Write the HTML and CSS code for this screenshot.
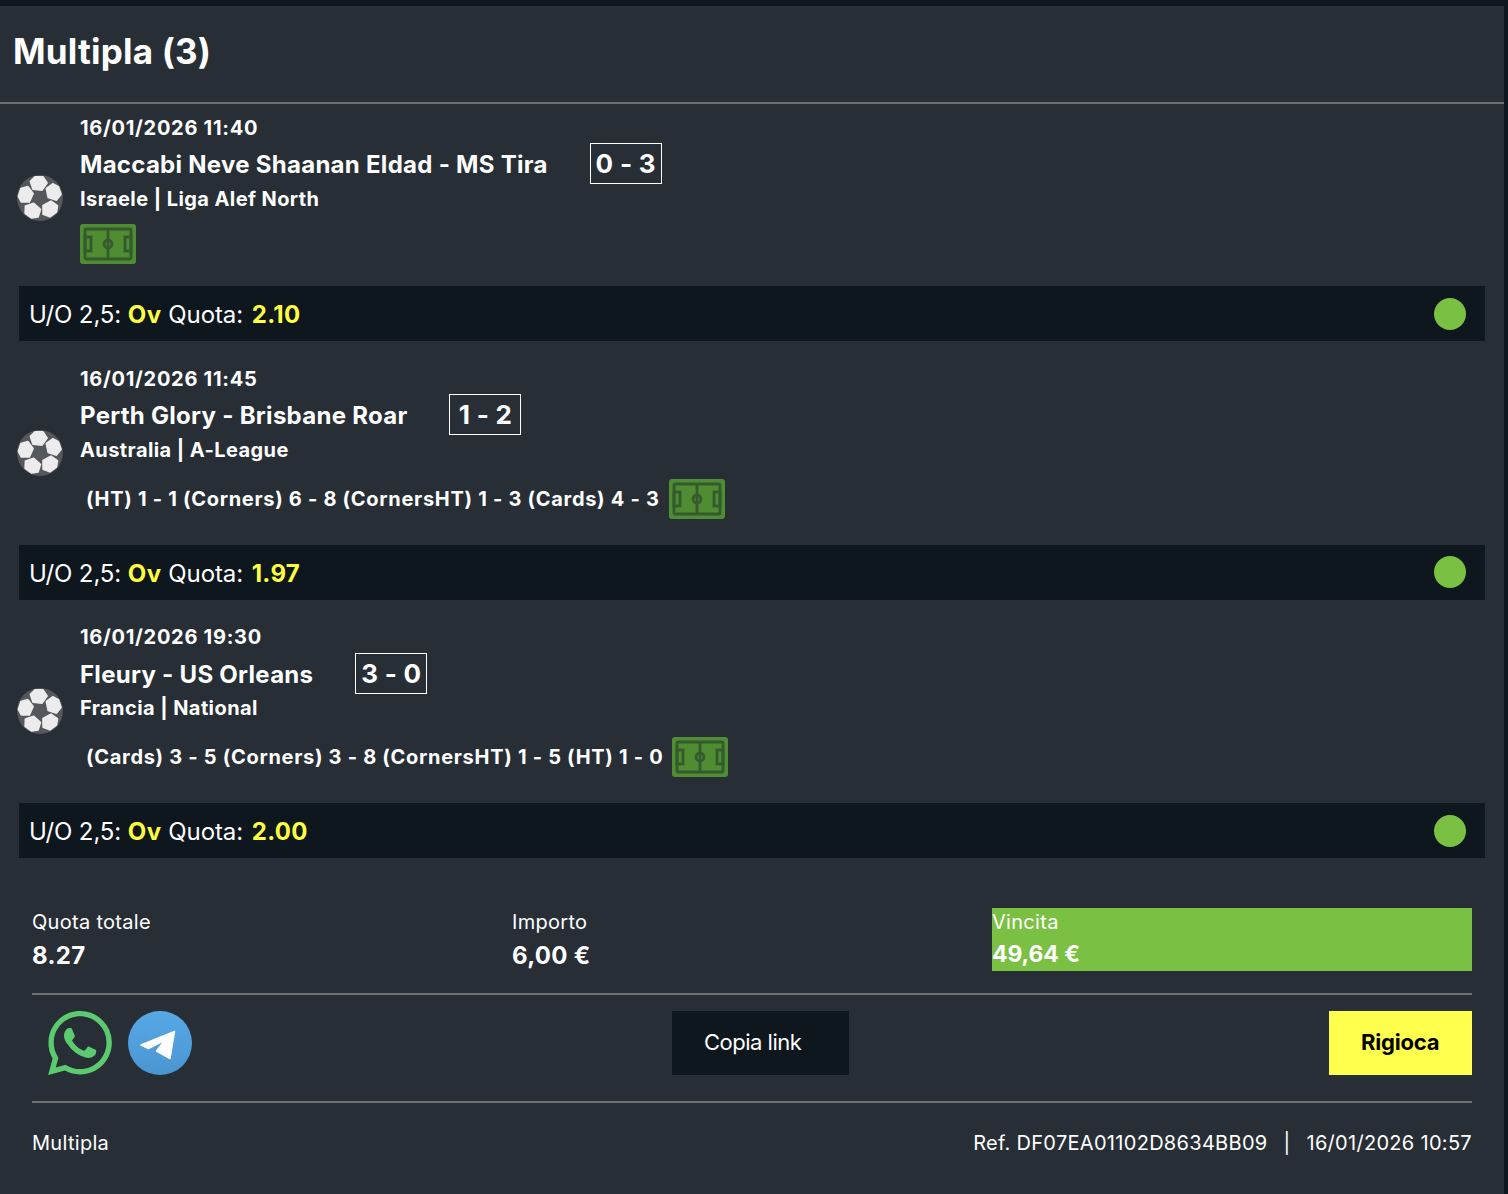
FILE: index.html
```html
<!DOCTYPE html>
<html lang="it">
<head>
<meta charset="utf-8">
<title>Multipla (3)</title>
<link rel="stylesheet" href="styles.css">
</head>
<body>
<svg class="defs" width="0" height="0" aria-hidden="true">
  <defs>
    <symbol id="ball" viewBox="0 0 46 46">
      <circle cx="23" cy="23" r="23" fill="#54575c"/>
      <g fill="#ececec" stroke="#ececec" stroke-width="1.8" stroke-linejoin="round">
        <polygon points="13.5,6.5 18,2 26,2 30,8 25,15 16,14"/>
        <polygon points="13.5,6.5 18,2 26,2 30,8 25,15 16,14" transform="rotate(72 23 23)"/>
        <polygon points="13.5,6.5 18,2 26,2 30,8 25,15 16,14" transform="rotate(144 23 23)"/>
        <polygon points="13.5,6.5 18,2 26,2 30,8 25,15 16,14" transform="rotate(216 23 23)"/>
        <polygon points="13.5,6.5 18,2 26,2 30,8 25,15 16,14" transform="rotate(288 23 23)"/>
      </g>
    </symbol>
    <symbol id="field" viewBox="0 0 56 40">
      <rect width="56" height="40" rx="3" fill="#4f8c32"/>
      <g fill="none" stroke="#355a2e" stroke-width="2.8">
        <rect x="5" y="5" width="46" height="30" rx="1"/>
        <line x1="28" y1="5" x2="28" y2="35"/>
        <circle cx="28" cy="20" r="4"/>
        <rect x="5" y="13" width="6" height="14"/>
        <rect x="45" y="13" width="6" height="14"/>
      </g>
    </symbol>
    <linearGradient id="tg-fill" x1="0" y1="0" x2="0" y2="1">
      <stop offset="0" stop-color="#57a8e6"/>
      <stop offset="1" stop-color="#4a96d2"/>
    </linearGradient>
  </defs>
</svg>
<main class="panel">
  <h1 class="title">Multipla (3)</h1>

  <section class="match match-first">
    <svg class="ball"><use href="#ball"/></svg>
    <div class="info">
      <div class="date">16/01/2026 11:40</div>
      <div class="teams"><span class="name">Maccabi Neve Shaanan Eldad - MS Tira</span><span class="score">0 - 3</span></div>
      <div class="league">Israele | Liga Alef North</div>
      <div class="extra"><svg class="field"><use href="#field"/></svg></div>
    </div>
  </section>
  <div class="bet"><span class="pick">U/O 2,5: <b>Ov</b> Quota: <b class="odds">2.10</b></span><i class="dot"></i></div>

  <section class="match">
    <svg class="ball"><use href="#ball"/></svg>
    <div class="info">
      <div class="date">16/01/2026 11:45</div>
      <div class="teams"><span class="name">Perth Glory - Brisbane Roar</span><span class="score">1 - 2</span></div>
      <div class="league">Australia | A-League</div>
      <div class="extra"><span class="stats">(HT) 1 - 1 (Corners) 6 - 8 (CornersHT) 1 - 3 (Cards) 4 - 3</span><svg class="field"><use href="#field"/></svg></div>
    </div>
  </section>
  <div class="bet"><span class="pick">U/O 2,5: <b>Ov</b> Quota: <b class="odds">1.97</b></span><i class="dot"></i></div>

  <section class="match">
    <svg class="ball"><use href="#ball"/></svg>
    <div class="info">
      <div class="date">16/01/2026 19:30</div>
      <div class="teams"><span class="name">Fleury - US Orleans</span><span class="score">3 - 0</span></div>
      <div class="league">Francia | National</div>
      <div class="extra"><span class="stats">(Cards) 3 - 5 (Corners) 3 - 8 (CornersHT) 1 - 5 (HT) 1 - 0</span><svg class="field"><use href="#field"/></svg></div>
    </div>
  </section>
  <div class="bet"><span class="pick">U/O 2,5: <b>Ov</b> Quota: <b class="odds">2.00</b></span><i class="dot"></i></div>

  <div class="summary">
    <div class="totals">
      <div class="cell"><div class="label">Quota totale</div><div class="value">8.27</div></div>
      <div class="cell"><div class="label">Importo</div><div class="value">6,00 €</div></div>
      <div class="cell win"><div class="label">Vincita</div><div class="value">49,64 €</div></div>
    </div>
    <div class="actions">
      <div class="share">
        <svg class="wa" viewBox="0 0 24 24"><path d="M17.472 14.382c-.297-.149-1.758-.867-2.03-.967-.273-.099-.471-.148-.67.15-.197.297-.767.966-.94 1.164-.173.199-.347.223-.644.075-.297-.15-1.255-.463-2.39-1.475-.883-.788-1.48-1.761-1.653-2.059-.173-.297-.018-.458.13-.606.134-.133.298-.347.446-.52.149-.174.198-.298.298-.497.099-.198.05-.371-.025-.52-.075-.149-.669-1.612-.916-2.207-.242-.579-.487-.5-.669-.51-.173-.008-.371-.01-.57-.01-.198 0-.52.074-.792.372-.272.297-1.04 1.016-1.04 2.479 0 1.462 1.065 2.875 1.213 3.074.149.198 2.096 3.2 5.077 4.487.709.306 1.262.489 1.694.625.712.227 1.36.195 1.871.118.571-.085 1.758-.719 2.006-1.413.248-.694.248-1.289.173-1.413-.074-.124-.272-.198-.57-.347m-5.421 7.403h-.004a9.87 9.87 0 01-5.031-1.378l-.361-.214-3.741.982.998-3.648-.235-.374a9.86 9.86 0 01-1.51-5.26c.001-5.45 4.436-9.884 9.888-9.884 2.64 0 5.122 1.03 6.988 2.898a9.825 9.825 0 012.893 6.994c-.003 5.45-4.437 9.884-9.885 9.884m8.413-18.297A11.815 11.815 0 0012.05 0C5.495 0 .16 5.335.157 11.892c0 2.096.547 4.142 1.588 5.945L.057 24l6.305-1.654a11.882 11.882 0 005.683 1.448h.005c6.554 0 11.89-5.335 11.893-11.893a11.821 11.821 0 00-3.48-8.413z"/></svg>
        <svg class="tg" viewBox="0 0 64 64">
          <circle cx="32" cy="32" r="32" fill="url(#tg-fill)"/>
          <polygon fill="#fff" stroke="#fff" stroke-width="1.5" stroke-linejoin="round" points="13,34 46.500,20.500 42,47.500 28.500,40 37,29 20.500,37.500"/>
        </svg>
      </div>
      <a class="btn btn-copy">Copia link</a>
      <a class="btn btn-replay">Rigioca</a>
    </div>
    <div class="meta">
      <span>Multipla</span>
      <span>Ref. DF07EA01102D8634BB09<span class="sep">|</span>16/01/2026 10:57</span>
    </div>
  </div>
</main>
</body>
</html>
```
FILE: styles.css
```css
* { box-sizing: border-box; }
html, body { margin: 0; padding: 0; }
body {
  background: #0e161e;
  color: #fff;
  font-family: Inter, "Liberation Sans", sans-serif;
  padding-top: 6px;
  width: 1508px;
  height: 1194px;
  overflow: hidden;
}
.defs { position: absolute; }
.panel {
  width: 1504px;
  height: 1188px;
  background: #272e36;
}
.title {
  margin: 0;
  height: 98px;
  border-bottom: 2px solid #6d7070;
  padding-left: 13px;
  font-size: 35px;
  line-height: 90px;
  font-weight: 700;
  letter-spacing: .2px;
}
.match {
  display: flex;
  align-items: center;
  height: 203.5px;
  padding-left: 17px;
}
.match-first {
  height: 182px;
  padding-bottom: 11px;
}
.ball {
  width: 46px;
  height: 46px;
  flex: none;
  margin-right: 17px;
  margin-top: 20px;
}
.match-first .ball { margin-top: 17px; }
.info { flex: 1; min-width: 0; }
.date { font-size: 20px; line-height: 24px; font-weight: 700; margin-bottom: 4px; letter-spacing: .72px; }
.match-first .date { line-height: 26px; margin-bottom: 2px; }
.teams { display: flex; align-items: center; height: 42px; }
.name { font-size: 24px; font-weight: 700; letter-spacing: .28px; }
.score {
  margin-left: 42px;
  margin-top: -2px;
  border: 1px solid #fff;
  width: 72px;
  height: 41px;
  line-height: 39px;
  text-align: center;
  font-size: 26px;
  font-weight: 700;
  letter-spacing: .3px;
}
.league { font-size: 20px; line-height: 24px; font-weight: 700; margin-top: 1px; margin-bottom: 17px; letter-spacing: .42px; }
.match-first .league { margin-top: 2px; margin-bottom: 13px; }
.extra { display: flex; align-items: center; height: 40px; }
.stats { font-size: 20px; font-weight: 700; margin-left: 6px; margin-right: 9px; letter-spacing: .7px; }
.field { width: 56px; height: 40px; flex: none; filter: blur(.4px); }
.bet {
  margin: 0 19px;
  height: 55px;
  width: 1466px;
  background: #0e161e;
  display: flex;
  align-items: center;
  justify-content: space-between;
  padding: 0 19px 0 10px;
  font-size: 24px;
}
.pick { padding-top: 2px; letter-spacing: -.1px; }
.bet b { color: #ffff3f; font-weight: 700; letter-spacing: .5px; }
.bet .odds { margin-left: 2px; letter-spacing: .3px; }
.dot { width: 32px; height: 32px; border-radius: 50%; background: #7ac143; }
.summary { padding: 50px 32px 0; }
.totals { display: flex; height: 63px; }
.cell { width: 480px; }
.label { font-size: 20px; line-height: 28px; letter-spacing: .3px; }
.value { font-size: 24px; font-weight: 700; line-height: 31px; margin-top: 4px; letter-spacing: .3px; }
.win { background: #7ac143; }
.win .value { font-size: 23px; margin-top: 3px; letter-spacing: -.1px; }
.actions {
  margin-top: 22px;
  border-top: 2px solid #6d7070;
  border-bottom: 2px solid #6d7070;
  padding: 16px 0 26px;
  display: flex;
  justify-content: space-between;
  height: 110px;
}
.share { display: flex; gap: 16px; padding-left: 16px; }
.wa { width: 64px; height: 64px; fill: #5ccb70; }
.tg { width: 64px; height: 64px; }
.btn {
  height: 64px;
  display: flex;
  align-items: center;
  padding-bottom: 2px;
  font-size: 22px;
}
.btn-copy { width: 177px; padding-left: 32px; background: #0e161e; color: #fff; letter-spacing: -.5px; }
.btn-replay { width: 143px; padding-left: 32px; background: #ffff4d; color: #000; font-weight: 700; letter-spacing: -.2px; }
.meta {
  display: flex;
  justify-content: space-between;
  font-size: 20px;
  line-height: 28px;
  margin-top: 26px;
  letter-spacing: .3px;
}
.sep { margin: 0 16px; }
```
